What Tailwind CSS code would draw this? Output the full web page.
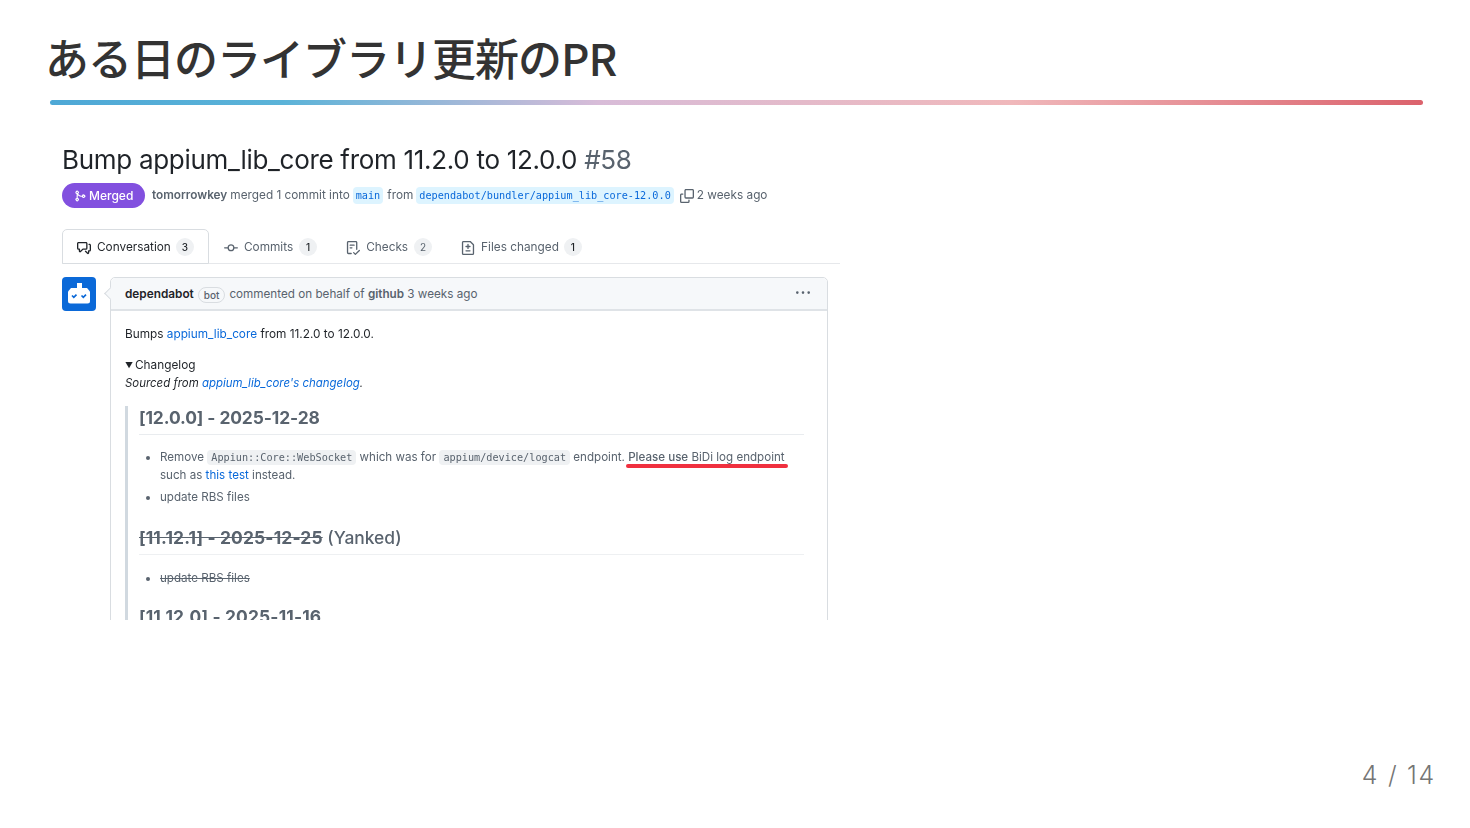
<!DOCTYPE html>
<html lang="ja">
<head>
<meta charset="utf-8">
<script src="https://cdn.jsdelivr.net/npm/@tailwindcss/browser@4"></script>
</head>
<body class="bg-white">
<div class="relative w-[1470px] h-[828px] overflow-hidden bg-white font-['Inter','Noto_Sans_CJK_JP',sans-serif]">
  <div class="pl-[50px] pr-[47px] pt-[27px]">
    <h1 class="h-[73px] -ml-[5px] text-[44px] leading-[60px] font-medium tracking-[-1px] text-[#333] font-['Noto_Sans_CJK_JP','Noto_Sans',sans-serif]">ある日のライブラリ更新のPR</h1>
    <div class="h-[5px] rounded-full bg-[linear-gradient(to_right,#4ea8d6_0%,#5bb3d8_17%,#d8bcd8_40%,#f0b8bb_70%,#db626c_100%)]"></div>
  </div>

  <div class="relative ml-[62px] mt-[30px] w-[778px] h-[485px] overflow-hidden blur-[0.25px]">
    <div class="h-[48px] pt-[7px] text-[26px] leading-[36px] tracking-[-0.3px] text-[#1f2328]">Bump appium_lib_core from 11.2.0 to 12.0.0 <span class="text-[#59636e]">#58</span></div>

    <div class="flex items-center h-[25px] text-[11.8px] text-[#59636e] whitespace-nowrap">
      <span class="flex items-center h-[25px] w-[83px] shrink-0 rounded-full bg-[#8250df] text-white text-[12px] font-medium pl-[12px] gap-[3px]">
        <svg class="w-[12px] h-[12px] fill-white" viewBox="0 0 16 16"><path d="M5.45 5.154A4.25 4.25 0 0 0 9.25 7.5h1.378a2.251 2.251 0 1 1 0 1.5H9.25A5.734 5.734 0 0 1 5 7.123v3.505a2.25 2.25 0 1 1-1.5 0V5.372a2.25 2.25 0 1 1 1.95-.218ZM4.25 13.5a.75.75 0 1 0 0-1.5.75.75 0 0 0 0 1.5Zm8.5-4.5a.75.75 0 1 0 0-1.5.75.75 0 0 0 0 1.5ZM5 3.25a.75.75 0 1 0 0 .005V3.25Z"/></svg>Merged</span>
      <span class="ml-[7px] font-semibold">tomorrowkey</span>
      <span class="ml-[3px]">merged 1 commit into</span>
      <span class="ml-[3px] px-[3px] rounded-[4px] bg-[#ddf4ff] text-[#0969da] text-[10.2px] leading-[17px] font-['DejaVu_Sans_Mono',monospace]">main</span>
      <span class="ml-[4px]">from</span>
      <span class="ml-[3px] px-[3px] rounded-[4px] bg-[#ddf4ff] text-[#0969da] text-[10.2px] leading-[17px] font-['DejaVu_Sans_Mono',monospace]">dependabot/bundler/appium_lib_core-12.0.0</span>
      <svg class="ml-[6px] w-[14px] h-[14px] fill-[#59636e]" viewBox="0 0 16 16"><path d="M0 6.75C0 5.784.784 5 1.75 5h1.5a.75.75 0 0 1 0 1.5h-1.5a.25.25 0 0 0-.25.25v7.5c0 .138.112.25.25.25h7.5a.25.25 0 0 0 .25-.25v-1.5a.75.75 0 0 1 1.5 0v1.5A1.75 1.75 0 0 1 9.25 16h-7.5A1.75 1.75 0 0 1 0 14.25Z"/><path d="M5 1.75C5 .784 5.784 0 6.75 0h7.5C15.216 0 16 .784 16 1.75v7.5A1.75 1.75 0 0 1 14.25 11h-7.5A1.75 1.75 0 0 1 5 9.25Zm1.75-.25a.25.25 0 0 0-.25.25v7.5c0 .138.112.25.25.25h7.5a.25.25 0 0 0 .25-.25v-7.5a.25.25 0 0 0-.25-.25Z"/></svg>
      <span class="ml-[3px]">2 weeks ago</span>
    </div>

    <div class="flex mt-[21px] h-[35px] border-b border-[#e6e8eb] text-[11.8px] text-[#1f2328] whitespace-nowrap">
      <div class="flex items-center h-[35px] w-[147px] pl-[14px] pt-[2px] border border-[#d9dde1] rounded-t-[5px] bg-white">
        <svg class="w-[14px] h-[14px] fill-[#1f2328]" viewBox="0 0 16 16"><path d="M1.75 1h8.5c.966 0 1.75.784 1.75 1.75v5.5A1.75 1.75 0 0 1 10.25 10H7.061l-2.574 2.573A1.458 1.458 0 0 1 2 11.543V10h-.25A1.75 1.75 0 0 1 0 8.25v-5.5C0 1.784.784 1 1.75 1ZM1.5 2.75v5.5c0 .138.112.25.25.25h1a.75.75 0 0 1 .75.75v2.19l2.72-2.72a.749.749 0 0 1 .53-.22h3.5a.25.25 0 0 0 .25-.25v-5.5a.25.25 0 0 0-.25-.25h-8.5a.25.25 0 0 0-.25.25Zm13 2a.25.25 0 0 0-.25-.25h-.5a.75.75 0 0 1 0-1.5h.5c.966 0 1.75.784 1.75 1.75v5.5A1.75 1.75 0 0 1 14.25 12H14v1.543a1.458 1.458 0 0 1-2.487 1.03L9.22 12.28a.749.749 0 0 1 .326-1.275.749.749 0 0 1 .734.215l2.22 2.22v-2.19a.75.75 0 0 1 .75-.75h1a.25.25 0 0 0 .25-.25Z"/></svg>
        <span class="ml-[6px]">Conversation</span>
        <span class="ml-[5px] mb-[2px] w-[18px] h-[18px] rounded-full bg-[#eff1f3] text-[10px] font-medium leading-[18px] text-center">3</span>
      </div>
      <div class="flex items-center h-[35px] ml-[15px] pt-[2px] text-[#59636e]">
        <svg class="w-[14px] h-[14px] fill-[#59636e]" viewBox="0 0 16 16"><path d="M11.93 8.5a4.002 4.002 0 0 1-7.86 0H.75a.75.75 0 0 1 0-1.5h3.32a4.002 4.002 0 0 1 7.86 0h3.32a.75.75 0 0 1 0 1.5Zm-1.43-.75a2.5 2.5 0 1 0-5 0 2.5 2.5 0 0 0 5 0Z"/></svg>
        <span class="ml-[6px]">Commits</span>
        <span class="ml-[6px] mb-[2px] w-[18px] h-[18px] rounded-full bg-[#eff1f3] text-[10px] font-medium leading-[18px] text-center text-[#1f2328]">1</span>
      </div>
      <div class="flex items-center h-[35px] ml-[29px] pt-[2px] text-[#59636e]">
        <svg class="w-[14px] h-[14px] fill-[#59636e]" viewBox="0 0 16 16"><path d="M2.5 1.75v11.5c0 .138.112.25.25.25h3.17a.75.75 0 0 1 0 1.5H2.75A1.75 1.75 0 0 1 1 13.25V1.75C1 .784 1.784 0 2.75 0h8.5C12.216 0 13 .784 13 1.75v7.736a.75.75 0 0 1-1.5 0V1.75a.25.25 0 0 0-.25-.25h-8.5a.25.25 0 0 0-.25.25Zm13.274 9.537v-.001l-4.557 4.45a.75.75 0 0 1-1.055-.008l-1.943-1.95a.75.75 0 0 1 1.062-1.058l1.419 1.425 4.026-3.932a.75.75 0 1 1 1.048 1.074ZM4.75 4h4.5a.75.75 0 0 1 0 1.5h-4.5a.75.75 0 0 1 0-1.5ZM4 7.75A.75.75 0 0 1 4.75 7h2a.75.75 0 0 1 0 1.5h-2A.75.75 0 0 1 4 7.75Z"/></svg>
        <span class="ml-[6px]">Checks</span>
        <span class="ml-[6px] mb-[2px] w-[18px] h-[18px] rounded-full bg-[#eff1f3] text-[10px] leading-[18px] text-center">2</span>
      </div>
      <div class="flex items-center h-[35px] ml-[29px] pt-[2px] text-[#59636e]">
        <svg class="w-[14px] h-[14px] fill-[#59636e]" viewBox="0 0 16 16"><path d="M1 1.75C1 .784 1.784 0 2.75 0h7.586c.464 0 .909.184 1.237.513l2.914 2.914c.329.328.513.773.513 1.237v9.586A1.75 1.75 0 0 1 13.25 16H2.75A1.75 1.75 0 0 1 1 14.25Zm1.75-.25a.25.25 0 0 0-.25.25v12.5c0 .138.112.25.25.25h10.5a.25.25 0 0 0 .25-.25V4.664a.25.25 0 0 0-.073-.177l-2.914-2.914a.25.25 0 0 0-.177-.073ZM8 3.25a.75.75 0 0 1 .75.75v1.5h1.5a.75.75 0 0 1 0 1.5h-1.5v1.5a.75.75 0 0 1-1.5 0V7h-1.5a.75.75 0 0 1 0-1.5h1.5V4A.75.75 0 0 1 8 3.25Zm-3 8a.75.75 0 0 1 .75-.75h4.5a.75.75 0 0 1 0 1.5h-4.5a.75.75 0 0 1-.75-.75Z"/></svg>
        <span class="ml-[6px]">Files changed</span>
        <span class="ml-[5px] mb-[2px] w-[18px] h-[18px] rounded-full bg-[#eff1f3] text-[10px] font-medium leading-[18px] text-center text-[#1f2328]">1</span>
      </div>
    </div>

    <div class="flex mt-[13px]">
      <svg class="w-[34px] h-[34px] shrink-0" viewBox="0 0 34 34"><rect width="34" height="34" rx="4" fill="#0b69d8"/><rect x="15" y="6" width="5" height="5.5" fill="#fff"/><path d="M9 11h16l3 3.5V24a2.5 2.5 0 0 1-2.5 2.5h-17A2.5 2.5 0 0 1 6 24v-9.5Z" fill="#fff"/><path d="M10 18.5l1.8 1.8 2.7-2.7M19.5 18.5l1.8 1.8 2.7-2.7" stroke="#0b69d8" stroke-width="1.7" fill="none"/></svg>

      <div class="relative ml-[14px] w-[718px] h-[400px] border border-[#d9dde1] rounded-t-[5px] text-[11.8px] text-[#1f2328] whitespace-nowrap">
        <div class="absolute -left-[5px] top-[11px] w-[9px] h-[9px] rotate-45 bg-[#f6f8fa] border-l border-b border-[#d9dde1]"></div>
        <div class="flex items-center h-[33px] pl-[14px] pr-[17px] pt-[2px] bg-[#f6f8fa] border-b-2 border-[#dfe3e7] rounded-t-[5px] text-[#59636e]">
          <span class="font-semibold text-[#1f2328]">dependabot</span>
          <span class="ml-[4px] px-[5px] h-[16px] leading-[14px] border border-[#d9dde1] rounded-full text-[10px] font-medium">bot</span>
          <span class="ml-[4px] text-[11.7px]">commented on behalf of <span class="font-semibold">github</span> 3 weeks ago</span>
          <svg class="ml-auto mb-[4px] w-[14px] h-[14px] fill-[#59636e]" viewBox="0 0 16 16"><path d="M8 9a1.5 1.5 0 1 0 0-3 1.5 1.5 0 0 0 0 3ZM1.5 9a1.5 1.5 0 1 0 0-3 1.5 1.5 0 0 0 0 3Zm13 0a1.5 1.5 0 1 0 0-3 1.5 1.5 0 0 0 0 3Z"/></svg>
        </div>
        <div class="pl-[14px] pr-[23px] pt-[14px]">
          <p class="leading-[18px]">Bumps <span class="text-[#0969da]">appium_lib_core</span> from 11.2.0 to 12.0.0.</p>
          <p class="mt-[13px] leading-[18px] flex items-center"><span class="text-[8px] w-[10px]">▼</span>Changelog</p>
          <p class="leading-[18px] italic text-[11.45px]">Sourced from <span class="text-[#0969da]">appium_lib_core's changelog</span>.</p>
          <div class="mt-[14px] pl-[11px] border-l-[3px] border-[#d1d9e0] text-[#59636e]">
            <h3 class="h-[29px] pb-[4px] border-b border-[#e9ecef] text-[17.4px] leading-[24px] font-bold tracking-[-0.1px]">[12.0.0] - 2025-12-28</h3>
            <ul class="mt-[14px] pl-[21px] list-disc leading-[17.5px] text-[11.6px]">
              <li>Remove <code class="px-[4px] py-[2px] rounded-[4px] bg-[#eff1f3] text-[10.2px] font-['DejaVu_Sans_Mono',monospace]">Appiun::Core::WebSocket</code> which was for <code class="px-[4px] py-[2px] rounded-[4px] bg-[#eff1f3] text-[10.2px] font-['DejaVu_Sans_Mono',monospace]">appium/device/logcat</code> endpoint. <span class="font-medium">Please use</span> BiDi log endpoint<br>such as <span class="text-[#0969da]">this test</span> instead.</li>
              <li class="mt-[5px]">update RBS files</li>
            </ul>
            <h3 class="mt-[19px] h-[29px] pb-[4px] border-b border-[#eef0f2] text-[17.4px] leading-[24px] font-medium tracking-[0px]"><span class="line-through font-bold tracking-[0.15px]">[11.12.1] - 2025-12-25</span> (Yanked)</h3>
            <ul class="mt-[14px] pl-[21px] list-disc leading-[18px] line-through text-[11.6px]">
              <li>update RBS files</li>
            </ul>
            <h3 class="mt-[18px] h-[29px] text-[17.4px] leading-[24px] font-bold tracking-[0.15px]">[11.12.0] - 2025-11-16</h3>
          </div>
        </div>
      </div>
    </div>

    <div class="absolute left-[564px] top-[329px] w-[162px] h-[4px] rounded-full bg-[#f0303f]"></div>
  </div>

  <div class="absolute right-[34px] bottom-[38px] text-[25px] leading-[30px] tracking-[1.7px] text-[#757575] font-['Inter',sans-serif] font-light">4 / 14</div>
</div>
</body>
</html>
